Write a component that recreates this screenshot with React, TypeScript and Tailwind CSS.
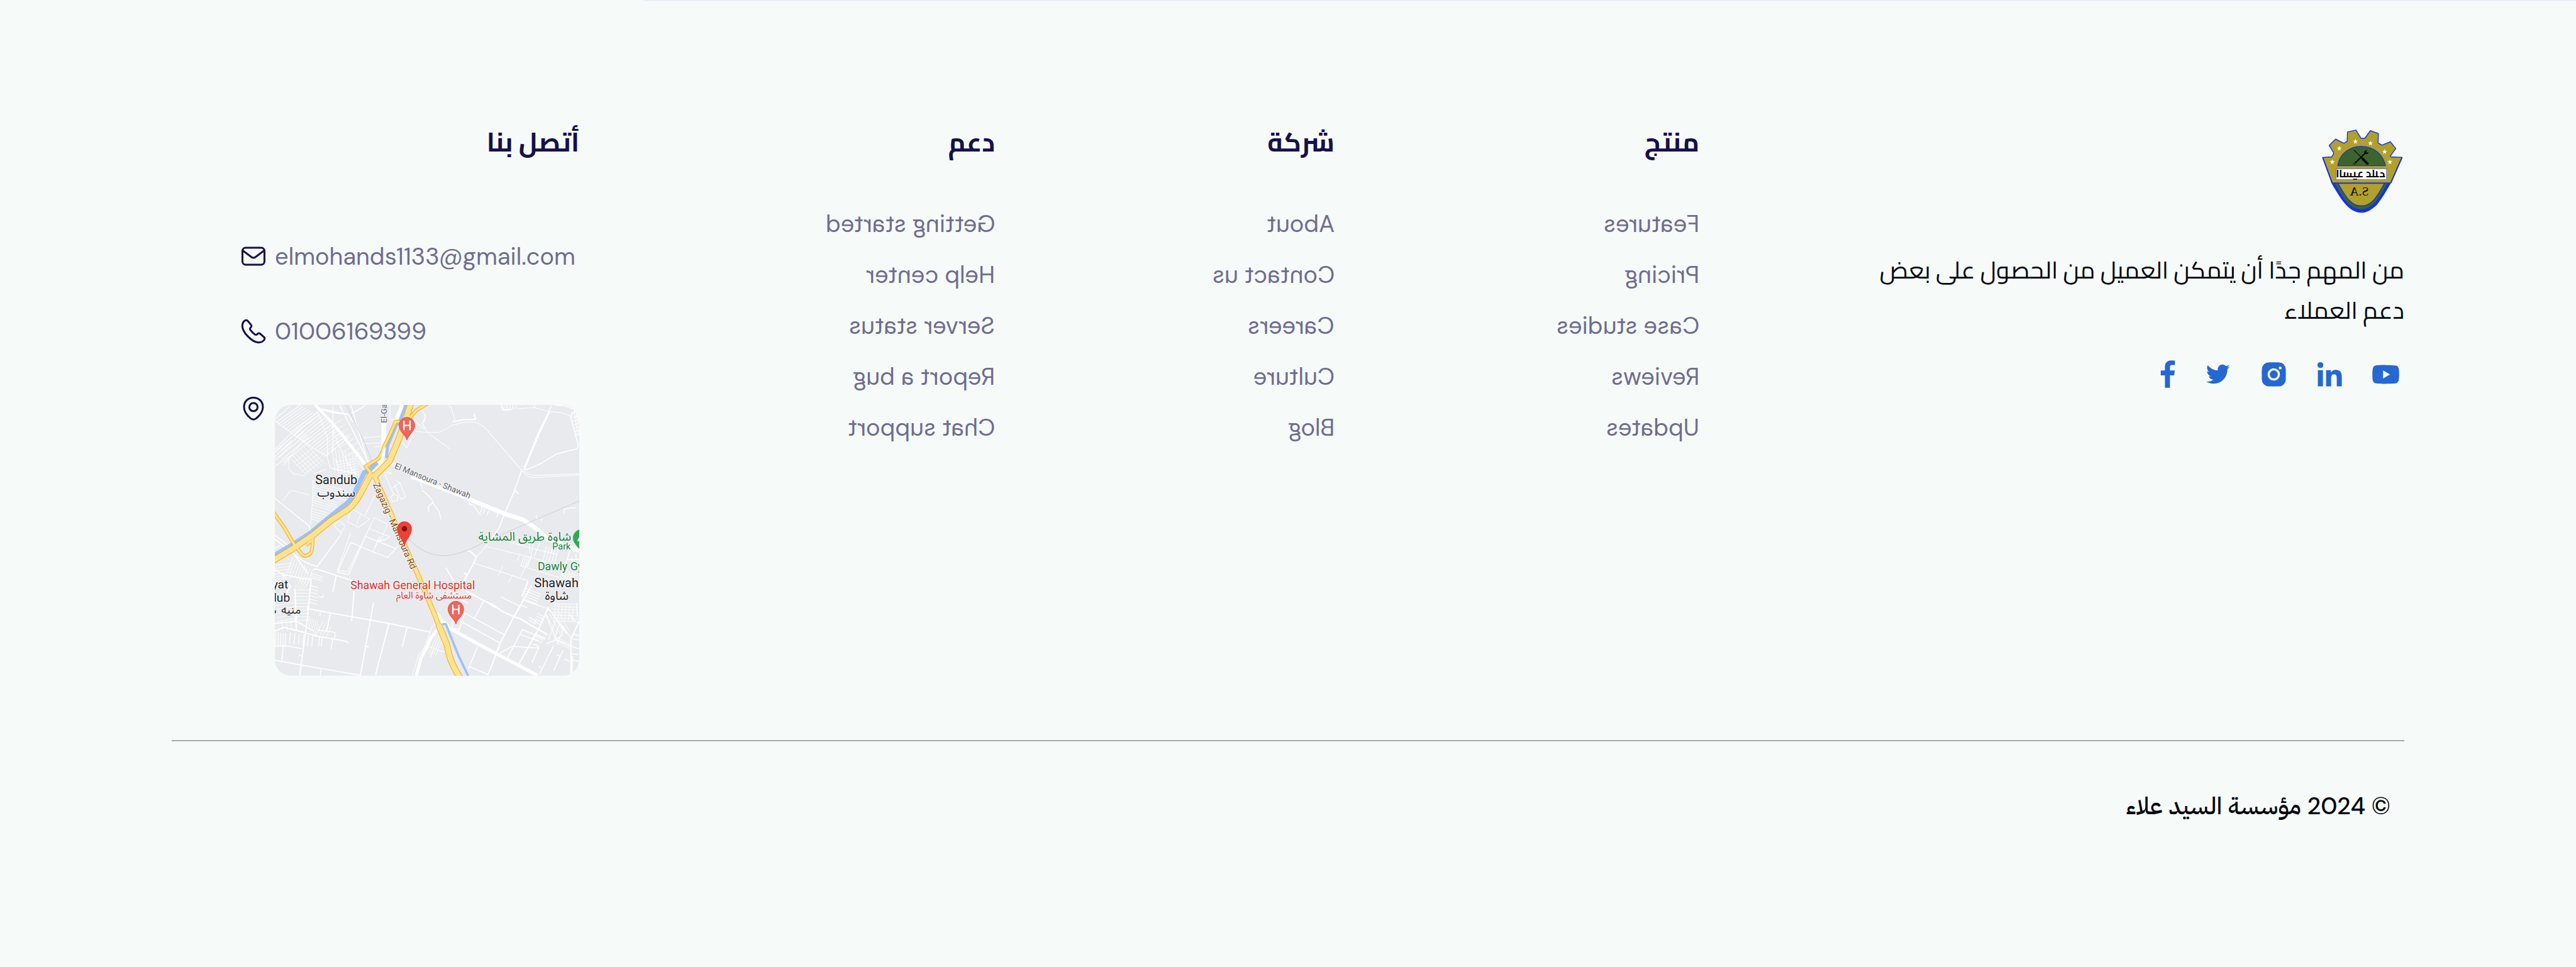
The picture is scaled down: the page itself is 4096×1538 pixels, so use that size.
import type { ReactNode } from 'react';
import {
  BiLogoFacebook,
  BiLogoInstagramAlt,
  BiLogoLinkedin,
  BiLogoTwitter,
  BiLogoYoutube,
} from 'react-icons/bi';

/** Path data for n parallel copies of one segment, each shifted by (dx, dy). */
function hatch(x1: number, y1: number, x2: number, y2: number, dx: number, dy: number, n: number) {
  let d = '';
  for (let i = 0; i < n; i++) {
    d += `M${x1 + dx * i} ${y1 + dy * i}L${x2 + dx * i} ${y2 + dy * i}`;
  }
  return d;
}

const STAR = 'M0 -24L6 -7H23L9 3L14 21L0 10L-14 21L-9 3L-23 -7H-6Z';

function Logo() {
  const stars = [
    [311, 374],
    [374, 252],
    [519, 190],
    [654, 206],
    [781, 282],
    [828, 374],
  ];
  return (
    <svg viewBox="220 83 736 750" className="h-[133px] w-[131px]" role="img" aria-label="السيد علاء">
      <path
        d="M300 555L322 595C380 690 455 829 572 829C620 829 650 810 708 762C760 700 800 625 842 555Z"
        fill="#1231ee"
      />
      <path d="M330 566C390 650 440 796 572 796C700 796 750 650 806 566Z" fill="#3c642e" />
      <path
        d="M362 566C410 640 460 768 572 768C680 768 730 650 780 566Z"
        fill="#b1a02b"
        stroke="#1231ee"
        strokeWidth="8"
      />
      <path
        d="M226 334L306 328L322 305V288L284 226L341 169L416 207L445 188L448 105L524 88L570 162H604L653 93L725 119L722 203L757 223L832 193L881 253L834 319L838 328L937 333L836 562H310Z"
        fill="#b1a02b"
        stroke="#1231ee"
        strokeWidth="8"
        strokeLinejoin="round"
      />
      <path d="M226 334L310 562" stroke="#1231ee" strokeWidth="11" />
      <path d="M937 333L836 562" stroke="#1231ee" strokeWidth="11" />
      <path
        d="M361 408C375 300 470 235 570 235C680 235 765 300 789 408Z"
        fill="#3c642e"
        stroke="#1231ee"
        strokeWidth="7"
      />
      {stars.map(([x, y]) => (
        <path key={x} d={STAR} transform={`translate(${x} ${y})`} fill="#ffffff" />
      ))}
      <path d="M507 268L575 336" stroke="#050505" strokeWidth="6" strokeLinecap="round" />
      <path d="M583 344L626 388" stroke="#050505" strokeWidth="22" strokeLinecap="round" />
      <path d="M518 382L606 296" stroke="#050505" strokeWidth="11" />
      <path
        d="M598 300C596 280 606 266 626 266L614 280L620 291L636 284C634 302 616 308 602 302Z"
        fill="#050505"
      />
      <circle cx="511" cy="389" r="9" fill="none" stroke="#050505" strokeWidth="4" />
      <rect x="346" y="436" width="452" height="96" fill="#ffffff" stroke="#2a3fd0" strokeWidth="3" />
      <g transform="translate(1144 0) scale(-1 1)" fill="#080808">
        <text
          x="578"
          y="512"
          textAnchor="middle"
          className="font-['Cairo','Noto_Sans_Arabic',sans-serif] text-[96px] font-bold"
        >
          السيد علاء
        </text>
        <text
          x="591"
          y="674"
          textAnchor="middle"
          direction="ltr"
          className="font-['Liberation_Serif',serif] text-[112px]"
        >
          S.A
        </text>
      </g>
    </svg>
  );
}

function HospitalPin() {
  return (
    <g>
      <path
        d="M0 134C-8 90 -70 60 -70 0A70 70 0 0 1 70 0C70 60 8 90 0 134Z"
        fill="#ec685d"
        stroke="#ea4335"
        strokeWidth="5"
      />
      <path d="M-27 -40V46M27 -40V46M-27 3H27" stroke="#ffffff" strokeWidth="13" fill="none" />
    </g>
  );
}

type LabelProps = {
  x: number;
  y: number;
  size: string;
  fill: string;
  anchor?: 'start' | 'middle' | 'end';
  rotate?: number;
  arabic?: boolean;
  children: ReactNode;
};

function Label({ x, y, size, fill, anchor = 'middle', rotate = 0, arabic, children }: LabelProps) {
  return (
    <text
      transform={`translate(${x} ${y}) rotate(${rotate})`}
      textAnchor={anchor}
      direction={arabic ? 'rtl' : 'ltr'}
      fill={fill}
      stroke="#f6f7f9"
      strokeWidth="12"
      strokeLinejoin="round"
      paintOrder="stroke"
      className={`${size} font-['Roboto','Noto_Sans_Arabic',sans-serif]`}
    >
      {children}
    </text>
  );
}

const MAIN_ROAD =
  'M1280 60L1230 220L1165 400L1085 590L985 690L935 730M920 700L830 870Q770 980 720 1015L560 1120L400 1250L230 1365L40 1480';
const SOUTH_ROAD = 'M945 700L1010 850L1120 1100L1225 1350L1330 1580L1500 1985L1530 2070';
const SOUTH_ROAD_END = 'M1525 2050L1600 2230Q1620 2380 1720 2530';
const SIDE_ROADS =
  'M1182 236L1142 232L1085 360L1035 460Q1010 560 965 580L872 634L925 700M1262 205L1330 130L1430 70M40 1035L150 1190L240 1345';
const RAMP = 'M398 1260Q400 1390 380 1410Q345 1450 305 1425L250 1355M340 1340L385 1300';

function StreetMap() {
  return (
    <svg viewBox="0 0 2724 2424" className="block h-auto w-full" role="img" aria-label="خريطة الموقع">
      <rect width="2724" height="2424" fill="#e8eaed" />

      <g fill="none" stroke="#ffffff" strokeWidth="6" strokeLinejoin="round">
        {/* north-west district */}
        <g transform="translate(-60 -84)">
          <path d={hatch(60, 215, 200, 90, 0, 0, 1) + hatch(70, 240, 290, 84, 22, 14, 8)} />
          <path d={hatch(215, 330, 440, 150, 22, 17, 14)} />
          <path d={hatch(60, 480, 210, 335, 0, 34, 4) + hatch(60, 500, 300, 300, 20, 25, 5)} />
          <path d="M60 225L200 330L400 470L520 540M60 630L200 540L320 400M185 560V660L230 700L330 720M140 620L190 570" />
          <path d={hatch(190, 550, 350, 720, 26, -18, 7)} strokeWidth="5" />
          <path d={hatch(230, 600, 400, 470, 24, 26, 5)} strokeWidth="5" />
          <path d="M440 140L530 370V560L560 650L790 700M570 270L620 420L700 580L780 700M580 100V500M630 640L600 560" />
          <path d={hatch(520, 300, 660, 215, 28, 42, 7)} strokeWidth="5" />
          <path d={hatch(600, 600, 780, 560, 6, 24, 8)} strokeWidth="5" />
          <path d={hatch(570, 470, 600, 680, 30, 6, 7)} strokeWidth="5" />
          <path d={hatch(750, 440, 790, 600, 20, 22, 4)} strokeWidth="5" />
          <path d="M640 84L900 600M740 84L890 590M750 160L870 90M480 120L720 170L760 240" strokeWidth="9" />
          <path d="M400 760V900L380 1150M410 700L520 660M205 850L125 945M215 850L370 890" />
          <path d={hatch(405, 780, 700, 850, -1, 22, 5) + hatch(400, 890, 620, 960, -1, 22, 5)} strokeWidth="5" />
          <path d={hatch(390, 1010, 560, 1060, 0, 24, 5)} strokeWidth="5" />
          <path d="M60 920L370 1170V1220M60 1250L190 1350M60 1280L150 1360" strokeWidth="9" />
          <path d="M420 84L580 250L700 400L880 630" strokeWidth="26" />
          <path d="M470 120L560 150L720 170" strokeWidth="12" />
          <path d="M1205 84L1150 225M1035 240L1033 460L1010 590L930 690" strokeWidth="42" />
          <path d="M1090 84V210L1180 220M840 380L1010 365M850 432L1010 425M950 460H1010" />
          <path d="M1340 120Q1410 150 1410 190L1380 250L1420 320M1300 220L1400 300M1200 420L1240 470L1290 360L1230 330" />
          <path d="M1080 600L1180 640" strokeWidth="26" />
          <path d="M1040 690Q1110 680 1100 700L1070 700M1045 700L1120 880L1160 900V940L1110 950L1095 910L1130 880M1110 830L1180 780L1230 910L1190 930L1130 800M1140 760L1180 780" />
          <path d="M950 900L870 1070M760 1020L910 1105L810 1180L710 1130Q720 1070 760 1020M830 1060L790 1150M590 1160L640 1120L690 1170L650 1230ZM870 1260L950 1095L1070 1150L1000 1310M900 1190L1080 1260" />
          <path d="M660 1230L440 1535M870 1265L710 1580L620 1560L740 1230" />
        </g>

        {/* north-east fields */}
        <g transform="translate(1320 -84)">
          <path d="M235 90L255 105L295 220M-60 320L0 326L140 332Q170 325 270 265Q430 220 490 245Q540 265 580 310L890 670M50 335L250 480M855 118L1000 108L1125 140L1250 155L1340 190M1005 84V110M0 140Q50 200 0 250L40 320" />
          <path d="M268 235L375 215L478 213L462 165M705 84L720 130L800 125" strokeWidth="11" />
          <path d={hatch(730, 84, 730, 130, 27, -2, 5)} />
          <path d="M1155 90L1130 150M1130 150L1040 330L910 650M905 660Q950 665 980 645L1070 605Q1180 530 1220 518L1380 478Q1395 470 1393 430L1330 200Q1330 150 1370 145M1180 84Q1330 90 1370 140Q1400 180 1404 240" strokeWidth="9" />
          <path d="M1135 150L1040 350L915 650" strokeWidth="15" />
          <path d={hatch(1345, 200, 1404, 180, 3, 32, 6) + hatch(1360, 150, 1390, 360, 18, 10, 3)} />
          <path d="M890 670Q950 735 980 735L1404 712M905 665Q960 715 1000 715L1404 700" />
          <path d="M888 670L830 840L740 1050L680 1200L620 1280M830 850L860 880" strokeWidth="10" />
          <path d="M400 920L740 1060L900 1110Q960 1150 1030 1200L1130 1290L1404 1390" strokeWidth="38" />
          <path d="M-100 730L410 925" strokeWidth="26" />
          <path d="M412 965L460 985L510 1060L530 1070M520 1050L535 1000M545 1060L560 1010M575 1075L595 1030M665 1088L680 1050M1265 1060L1270 1015L1375 1003M1020 1070V1100L1040 1108M1068 1100V1130M0 850Q90 920 95 960L150 1040L168 1110M90 960L50 1000L60 1040" strokeWidth="8" />
          <path d="M-20 750L0 840" />
        </g>

        {/* south-west district */}
        <g transform="translate(-60 1176)">
          <path d="M60 30L150 90M60 110L130 70M220 150Q330 250 440 270L640 0" strokeWidth="9" />
          <path d="M400 300L430 292L610 350L760 400M610 350L578 500M770 480L748 760M345 645L550 685L750 720L915 750L1080 780L1450 858M555 690L525 850M943 595L915 750L825 1248M1080 785L962 1240M1243 820L1200 990M870 985L900 990" strokeWidth="11" />
          <path d="M740 55L620 320L720 345L830 95ZM740 55L830 95L930 135L1070 190L1160 90M830 95L870 0L980 45L940 135M870 0L1140 110M1000 0L980 45L1050 30L1090 0" strokeWidth="8" />
          <path d="M60 300L130 340L290 375L385 385L345 790L282 1248M60 850L140 815L320 860L440 895L700 940L720 958M60 780L170 770L250 760L410 850M240 470L255 850M130 340L200 450L130 560M230 160Q330 290 350 330" strokeWidth="11" />
          <path d={hatch(220, 190, 170, 330, 22, 14, 9)} strokeWidth="5" />
          <path d={hatch(60, 260, 210, 240, 0, 26, 6)} strokeWidth="5" />
          <path d={hatch(240, 460, 300, 380, 24, 6, 4) + hatch(230, 480, 375, 480, 0, 30, 10)} strokeWidth="5" />
          <path d={hatch(380, 330, 490, 365, -2, 18, 3) + hatch(380, 440, 450, 460, -2, 30, 6)} strokeWidth="6" />
          <path d={hatch(70, 860, 65, 985, 22, 2, 5) + hatch(200, 860, 190, 960, 40, 6, 6)} strokeWidth="7" />
          <path d={hatch(350, 720, 375, 820, 22, 8, 5) + hatch(490, 760, 440, 870, 26, 12, 4)} strokeWidth="5" />
          <path d={hatch(60, 620, 250, 590, 4, 36, 5) + hatch(120, 740, 130, 850, 40, -4, 4)} strokeWidth="5" />
          <path d="M460 900L452 985M485 905L475 985M578 920L562 1010M600 860L595 930M440 840L600 860M420 850L430 890M470 680L462 710M495 520L490 548L450 540" strokeWidth="8" />
          <path d="M60 985L145 978L310 1008M135 985L122 1115M60 1110L290 1152L830 1245M475 1180L468 1248M275 1062L300 1072" strokeWidth="9" />
          <path d="M1500 860Q1440 920 1430 970L1370 1090L1325 1248" strokeWidth="28" />
          <path d="M1500 790Q1460 800 1450 860L1400 990L1345 1070L1290 1248" />
          <path d="M1440 990L1500 1010L1620 1052M1450 1085L1480 1020" />
        </g>

        {/* south-east district */}
        <g transform="translate(1320 1176)">
          <path d="M405 130L430 135L485 185L460 240L375 400M210 280L280 400M370 330L400 340L380 380" strokeWidth="11" />
          <path d="M570 90L980 190L1100 225M570 90L485 185M600 20L570 90M460 240L800 350L950 400M720 265L680 350M805 355L770 415M780 50L960 105L1200 160M1000 30L970 190L875 370M960 60V150M1050 60L1000 180M870 170L850 220M880 265L1230 370" />
          <path d={hatch(910, 180, 880, 265, 20, 4, 4) + hatch(1110, 90, 1080, 220, 26, 6, 5)} strokeWidth="6" />
          <path d="M390 490L540 570L640 620L720 675L820 720L880 740L960 790L1120 880" strokeWidth="13" />
          <path d="M610 605L660 635" strokeWidth="24" />
          <path d="M550 580L468 730M700 540L870 625M375 685L730 880M360 770L695 955M380 690L325 850M270 760V830H330M340 560L410 600" strokeWidth="9" />
          <path d="M945 405L890 540M980 440L820 720L690 970L640 1110L585 1245M1130 630L1040 830L860 1150M1404 760L1330 920V1230M1340 1070V1240" strokeWidth="12" />
          <path d="M895 835L765 1085M895 835L1100 920M880 880L1040 940M495 990L410 1190M420 1165L590 1240M690 1050L800 985L1040 1000L980 1135M985 970Q1020 960 1045 1000M1260 1020L1175 1205M1205 1060L1230 1075M1270 1098L1320 1120M1175 980L1045 1240M1045 1165L1065 1180" strokeWidth="9" />
          <path d={hatch(925, 465, 1060, 520, -8, 22, 5) + hatch(1030, 690, 1100, 725, -10, 24, 4)} strokeWidth="6" />
          <path d={hatch(900, 570, 1100, 640, 0, 0, 1) + hatch(890, 620, 940, 640, 0, 0, 1) + hatch(955, 725, 1020, 760, -8, 22, 2)} strokeWidth="9" />
          <path d="M1110 640Q1160 680 1200 740L1330 910M1125 640L1290 870M1100 690L1200 930L1404 1010" strokeWidth="8" />
          <path d={hatch(1110, 700, 1210, 880, 26, -8, 5)} strokeWidth="5" />
          <path d={hatch(1150, 600, 1390, 610, 4, 26, 7)} strokeWidth="5" />
          <path d={hatch(1190, 600, 1180, 740, 32, 4, 6) + hatch(1270, 300, 1230, 400, 26, 4, 5)} strokeWidth="5" />
          <path d={hatch(1240, 330, 1390, 350, 2, 22, 4) + hatch(1190, 900, 1320, 960, 0, 16, 4)} strokeWidth="5" />
          <path d={hatch(1010, 870, 1100, 915, -14, 18, 3) + hatch(1190, 760, 1130, 930, 40, 20, 3)} strokeWidth="6" />
          <path d="M1320 130L1250 350M1290 210H1404M1375 160V210M1340 190V260M1310 690L1370 760M1380 600L1390 720M1330 1050L1395 1060M1340 1110L1404 1120M1340 870L1404 890M1345 920L1404 930M1260 880L1190 930L1110 960" strokeWidth="8" />
          <path d="M135 685L175 765Q210 770 240 820L500 965L660 1050L1030 1245" strokeWidth="30" />
          <path d={hatch(130, 880, 60, 1050, 20, 6, 4)} strokeWidth="5" />
          <path d="M1404 130L1320 95M130 840Q70 900 60 960L0 1075" strokeWidth="22" />
        </g>
      </g>

      {/* railway */}
      <g fill="none" stroke="#c9cbd0" strokeWidth="5">
        <path d="M640 0L800 330L930 660" />
        <path d="M1190 1196Q1330 1346 1500 1351Q1650 1351 1860 1236L2260 1060L2724 860" />
      </g>

      {/* canal */}
      <g fill="none" stroke="#9dc0fa" transform="translate(-60 -84)">
        <path d="M1232 84L1185 210L1145 270L1070 450L1058 560" strokeWidth="26" />
        <path d="M975 600L915 660L860 690L765 890Q730 950 680 985L560 1080L480 1145L380 1230L245 1318L40 1440" strokeWidth="42" />
        <path d="M1560 2045H1590L1700 2320L1790 2510" strokeWidth="20" />
      </g>

      {/* highways */}
      <g fill="none" strokeLinejoin="round" transform="translate(-60 -84)">
        <g stroke="#f9ab00">
          <path d={SIDE_ROADS} strokeWidth="32" />
          <path d={RAMP} strokeWidth="32" />
          <path d={SOUTH_ROAD} strokeWidth="44" />
          <path d={SOUTH_ROAD_END} strokeWidth="58" />
          <path d={MAIN_ROAD} strokeWidth="58" />
        </g>
        <g stroke="#fde293">
          <path d={SIDE_ROADS} strokeWidth="21" />
          <path d={RAMP} strokeWidth="21" />
          <path d={SOUTH_ROAD} strokeWidth="33" />
          <path d={SOUTH_ROAD_END} strokeWidth="47" />
          <path d={MAIN_ROAD} strokeWidth="47" />
        </g>
        <path d="M1000 600L1030 480L1048 460L1040 560L950 680Z" fill="#ffffff" />
      </g>

      {/* labels */}
      <Label x={550} y={711} size="text-[112px]" fill="#202124">Sandub</Label>
      <Label x={550} y={820} size="text-[110px]" fill="#202124" arabic>سندوب</Label>
      <Label x={1000} y={162} size="text-[74px]" fill="#5f6368" anchor="start" rotate={-90}>El-Ga</Label>
      <Label x={1066} y={566} size="text-[74px]" fill="#5f6368" anchor="start" rotate={22}>El Mansoura - Shawah</Label>
      <Label x={878} y={712} size="text-[82px]" fill="#84480f" anchor="start" rotate={66}>Zagazig - Mansoura Rd</Label>
      <Label x={1234} y={1648} size="text-[100px]" fill="#d93025">Shawah General Hospital</Label>
      <Label x={1424} y={1731} size="text-[84px]" fill="#d93025" arabic>مستشفى شاوة العام</Label>
      <Label x={2237} y={1216} size="text-[110px]" fill="#188038" arabic>شاوة طريق المشاية</Label>
      <Label x={2648} y={1296} size="text-[82px]" fill="#188038" anchor="end">Park</Label>
      <Label x={2352} y={1478} size="text-[100px]" fill="#188038" anchor="start">Dawly Gy</Label>
      <Label x={2520} y={1633} size="text-[112px]" fill="#202124">Shawah</Label>
      <Label x={2523} y={1744} size="text-[110px]" fill="#202124" arabic>شاوة</Label>
      <Label x={120} y={1646} size="text-[108px]" fill="#202124" anchor="end">yat</Label>
      <Label x={136} y={1759} size="text-[108px]" fill="#202124" anchor="end">lub</Label>
      <Label x={146} y={1869} size="text-[102px]" fill="#202124" arabic>منيه</Label>
      <rect x="0" y="1838" width="8" height="28" fill="#202124" />

      {/* pins */}
      <g transform="translate(1182 181)">
        <HospitalPin />
      </g>
      <g transform="translate(1620 1828)">
        <HospitalPin />
      </g>
      <g transform="translate(1160 1109)">
        <path d="M0 162C-8 100 -66 66 -66 0A66 66 0 0 1 66 0C66 66 8 100 0 162Z" fill="#ea4335" />
        <circle r="24" fill="#7d1411" />
      </g>
      <g transform="translate(2744 1190)">
        <path d="M0 140C-8 90 -76 60 -76 0A76 76 0 0 1 76 0C76 60 8 90 0 140Z" fill="#34a853" />
        <path d="M-38 28L-18 -12L0 28Z" fill="#ffffff" />
      </g>
    </svg>
  );
}

function LineIcon({ children }: { children: ReactNode }) {
  return (
    <svg
      viewBox="0 0 40 40"
      className="size-10 shrink-0"
      fill="none"
      stroke="#170f49"
      strokeWidth="3"
      strokeLinecap="round"
      strokeLinejoin="round"
      aria-hidden="true"
    >
      {children}
    </svg>
  );
}

const columns = [
  { title: 'منتج', links: ['Features', 'Pricing', 'Case studies', 'Reviews', 'Updates'] },
  { title: 'شركة', links: ['About', 'Contact us', 'Careers', 'Culture', 'Blog'] },
  { title: 'دعم', links: ['Getting started', 'Help center', 'Server status', 'Report a bug', 'Chat support'] },
];

const socials = [
  { label: 'YouTube', icon: <BiLogoYoutube className="size-[51px] shrink-0" />, box: 'w-[58px]' },
  { label: 'LinkedIn', icon: <BiLogoLinkedin className="size-[51px] shrink-0" />, box: 'w-[58px]' },
  { label: 'Instagram', icon: <BiLogoInstagramAlt className="size-[51px] shrink-0" />, box: 'w-[58px]' },
  { label: 'Twitter', icon: <BiLogoTwitter className="size-[46px] shrink-0" />, box: 'w-[58px]' },
  { label: 'Facebook', icon: <BiLogoFacebook className="size-[58px] shrink-0" />, box: 'w-10' },
];

function Heading({ children }: { children: ReactNode }) {
  return <h2 className="text-[42px] leading-[64px] font-bold text-[#170f49]">{children}</h2>;
}

export default function App() {
  return (
    <footer
      dir="rtl"
      className="min-h-screen bg-[#f6fbf9] font-['Cairo','Noto_Sans_Arabic',sans-serif] text-[#03070f]"
    >
      <div className="h-0.5 w-3/4 bg-[#eeeef5]" />
      <div className="px-[6.667%] pt-48">
        <div className="grid grid-cols-[minmax(0,1121fr)_minmax(0,580fr)_minmax(0,540fr)_minmax(0,661fr)_minmax(0,648fr)]">
          <div className="pt-3">
            <Logo />
            <p className="mt-[58px] max-w-[880px] text-[38px] leading-[64px]">
              من المهم جدًا أن يتمكن العميل من الحصول على بعض دعم العملاء
            </p>
            <div className="mt-11 flex items-center gap-[31px] text-[#2567d3]">
              {socials.map((s) => (
                <a
                  key={s.label}
                  href="#"
                  aria-label={s.label}
                  className={`flex h-[52px] items-center justify-center ${s.box}`}
                >
                  {s.icon}
                </a>
              ))}
            </div>
          </div>

          {columns.map((c) => (
            <nav key={c.title} aria-label={c.title}>
              <Heading>{c.title}</Heading>
              <ul className="mt-[58px] flex flex-col items-start font-['DM_Sans','Lato',sans-serif] text-[38px] leading-[81px] text-[#6f6c90]">
                {c.links.map((l) => (
                  <li key={l}>
                    <a href="#" dir="ltr" className="block -scale-x-100 whitespace-nowrap">
                      {l}
                    </a>
                  </li>
                ))}
              </ul>
            </nav>
          ))}

          <div>
            <Heading>أتصل بنا</Heading>
            <address
              dir="ltr"
              className="mt-[126px] mr-auto ml-[110px] flex max-w-[538px] flex-col gap-[71px] font-['DM_Sans','Lato',sans-serif] text-[38px] leading-[48px] text-[#6f6c90] not-italic"
            >
              <a href="mailto:elmohands1133@gmail.com" className="flex items-center gap-3.5">
                <LineIcon>
                  <rect x="2.5" y="6" width="35" height="27" rx="5" />
                  <path d="M3 10.5L17 21Q20 23 23 21L37 10.5" />
                </LineIcon>
                elmohands1133@gmail.com
              </a>
              <a href="tel:01006169399" className="flex items-center gap-3.5">
                <LineIcon>
                  <path d="M10.6 3Q8.4 1.4 6.2 3Q2.2 6 2.3 11.6C2.7 22 17.6 37.3 28.2 37.7Q33.6 37.7 37 33.6Q38.6 31.3 36.8 29.2L30.4 23.6Q28.6 22.5 27 23.6L25.4 25Q24 26 22.4 25C19.2 22.8 17.2 20.6 15 17.6Q14 16 15 14.6L16.3 13Q17.4 11.4 16.2 9.6Z" />
                </LineIcon>
                01006169399
              </a>
              <div className="flex items-start gap-3.5">
                <div className="pt-2">
                  <LineIcon>
                    <path d="M20 2.5C10.6 2.5 5 9.2 5 17.4C5 24.4 9.4 30.2 15.4 35.4Q20 39 24.6 35.4C30.6 30.2 35 24.4 35 17.4C35 9.2 29.4 2.5 20 2.5Z" />
                    <circle cx="20" cy="17.5" r="6.6" />
                  </LineIcon>
                </div>
                <div className="mt-[22px] min-w-0 flex-1 overflow-hidden rounded-[26px]">
                  <StreetMap />
                </div>
              </div>
            </address>
          </div>
        </div>

        <hr className="mt-[102px] border-t-2 border-[#aaaaaa]" />
        <p className="mt-[71px] pr-[22px] font-['DM_Sans','IBM_Plex_Sans_Arabic','Noto_Sans_Arabic',sans-serif] text-[38px] leading-[64px] font-medium">
          © 2024 مؤسسة السيد علاء
        </p>
      </div>
    </footer>
  );
}
